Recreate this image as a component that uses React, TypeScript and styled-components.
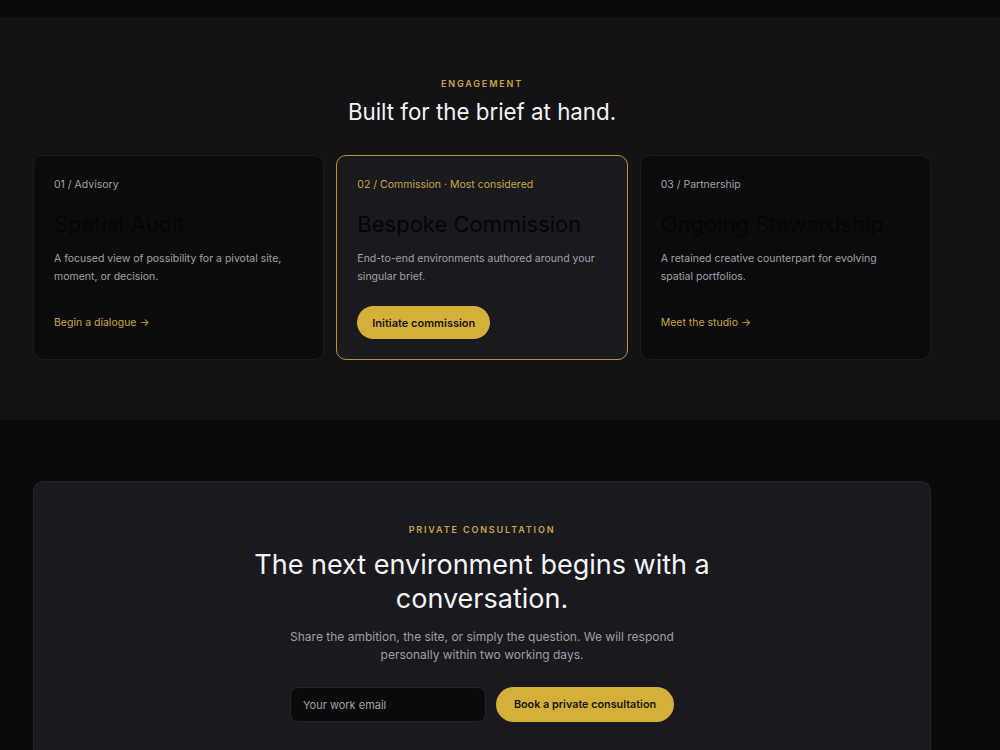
import React from "react";
import styled, { createGlobalStyle } from "styled-components";

const GlobalStyle = createGlobalStyle`
  * { box-sizing: border-box; }
  html, body { margin: 0; padding: 0; background: #0b0b0c; }
  body {
    font-family: Inter, "Noto Sans", "Liberation Sans", sans-serif;
    color: #f4f4f5;
    -webkit-font-smoothing: antialiased;
  }
`;

const gold = "#d4b03a";
const goldText = "#c9a645";

const TopEdge = styled.div`
  height: 17px;
  background: #0b0b0c;
`;

const Section = styled.section<{ $tone: "raised" | "base" }>`
  background: ${(p) => (p.$tone === "raised" ? "#131315" : "#0b0b0c")};
  padding: ${(p) => (p.$tone === "raised" ? "61px 0 60px" : "61px 0 0")};
`;

const Container = styled.div`
  width: 898px;
  margin-left: 33px;
`;

const Eyebrow = styled.div`
  text-align: center;
  font-size: 9px;
  font-weight: 600;
  letter-spacing: 1.85px;
  text-transform: uppercase;
  color: ${goldText};
  line-height: 12px;
`;

const SectionTitle = styled.h2`
  margin: 7px 0 0;
  text-align: center;
  font-size: 22.3px;
  font-weight: 400;
  line-height: 30px;
  color: #f4f4f5;
`;

const CardGrid = styled.div`
  margin-top: 28px;
  display: grid;
  grid-template-columns: repeat(3, 1fr);
  gap: 12px;
`;

const Card = styled.article<{ $featured?: boolean }>`
  height: 205px;
  border-radius: 10px;
  padding: 22px 20px 0;
  background: ${(p) => (p.$featured ? "#1a1a1e" : "#0c0c0c")};
  border: 1px solid ${(p) => (p.$featured ? "#b3953f" : "#1c1c1f")};
  display: flex;
  flex-direction: column;
`;

const CardLabel = styled.div<{ $featured?: boolean }>`
  font-size: 10.5px;
  line-height: 14px;
  color: ${(p) => (p.$featured ? goldText : "#a1a1aa")};
`;

const CardTitle = styled.h3`
  margin: 18px 0 0;
  font-size: 22px;
  font-weight: 400;
  line-height: 28px;
  color: #060606;
`;

const CardText = styled.p`
  margin: 12px 0 0;
  font-size: 10.5px;
  line-height: 18px;
  color: #a0a0ab;
`;

const CardLink = styled.a`
  margin-top: 30px;
  font-size: 10.5px;
  line-height: 14px;
  color: ${goldText};
  text-decoration: none;
`;

const PillButton = styled.button<{ $wide?: boolean }>`
  align-self: flex-start;
  height: ${(p) => (p.$wide ? "35px" : "33px")};
  padding: 0 ${(p) => (p.$wide ? "18px" : "15px")};
  border: none;
  border-radius: 999px;
  background: ${gold};
  color: #17150f;
  font-family: inherit;
  font-size: ${(p) => (p.$wide ? "10.8px" : "11px")};
  font-weight: 600;
  cursor: pointer;
`;

const CardAction = styled.div`
  margin-top: 20px;
  display: flex;
`;

const Consultation = styled.div`
  border-radius: 10px;
  background: #1a1a1e;
  border: 1px solid #26262a;
  border-bottom: none;
  padding: 42px 0 40px;
  display: flex;
  flex-direction: column;
  align-items: center;
`;

const BigTitle = styled.h2`
  margin: 12px 0 0;
  width: 470px;
  text-align: center;
  font-size: 27px;
  font-weight: 400;
  line-height: 34px;
  color: #f4f4f5;
`;

const Lead = styled.p`
  margin: 12px 0 0;
  width: 400px;
  text-align: center;
  font-size: 12px;
  line-height: 18px;
  color: #9d9da8;
`;

const Form = styled.form`
  margin-top: 23px;
  display: flex;
  gap: 10px;
`;

const EmailInput = styled.input`
  width: 196px;
  height: 35px;
  padding: 0 12px;
  border-radius: 8px;
  border: 1px solid #26262a;
  background: #0b0b0c;
  color: #e4e4e7;
  font-family: inherit;
  font-size: 11px;
  outline: none;
  &::placeholder { color: #a1a1aa; }
`;

type Offer = {
  label: string;
  title: string;
  text: string;
  cta: string;
  featured?: boolean;
};

const offers: Offer[] = [
  {
    label: "01 / Advisory",
    title: "Spatial Audit",
    text: "A focused view of possibility for a pivotal site, moment, or decision.",
    cta: "Begin a dialogue →",
  },
  {
    label: "02 / Commission · Most considered",
    title: "Bespoke Commission",
    text: "End-to-end environments authored around your singular brief.",
    cta: "Initiate commission",
    featured: true,
  },
  {
    label: "03 / Partnership",
    title: "Ongoing Stewardship",
    text: "A retained creative counterpart for evolving spatial portfolios.",
    cta: "Meet the studio →",
  },
];

export default function App() {
  return (
    <>
      <GlobalStyle />
      <TopEdge />
      <Section $tone="raised">
        <Container>
          <Eyebrow>Engagement</Eyebrow>
          <SectionTitle>Built for the brief at hand.</SectionTitle>
          <CardGrid>
            {offers.map((o) => (
              <Card key={o.label} $featured={o.featured}>
                <CardLabel $featured={o.featured}>{o.label}</CardLabel>
                <CardTitle>{o.title}</CardTitle>
                <CardText>{o.text}</CardText>
                {o.featured ? (
                  <CardAction>
                    <PillButton type="button">{o.cta}</PillButton>
                  </CardAction>
                ) : (
                  <CardLink href="#">{o.cta}</CardLink>
                )}
              </Card>
            ))}
          </CardGrid>
        </Container>
      </Section>
      <Section $tone="base">
        <Container>
          <Consultation>
            <Eyebrow>Private consultation</Eyebrow>
            <BigTitle>The next environment begins with a conversation.</BigTitle>
            <Lead>
              Share the ambition, the site, or simply the question. We will respond
              personally within two working days.
            </Lead>
            <Form onSubmit={(e) => e.preventDefault()}>
              <EmailInput type="email" placeholder="Your work email" />
              <PillButton type="submit" $wide>
                Book a private consultation
              </PillButton>
            </Form>
          </Consultation>
        </Container>
      </Section>
    </>
  );
}
